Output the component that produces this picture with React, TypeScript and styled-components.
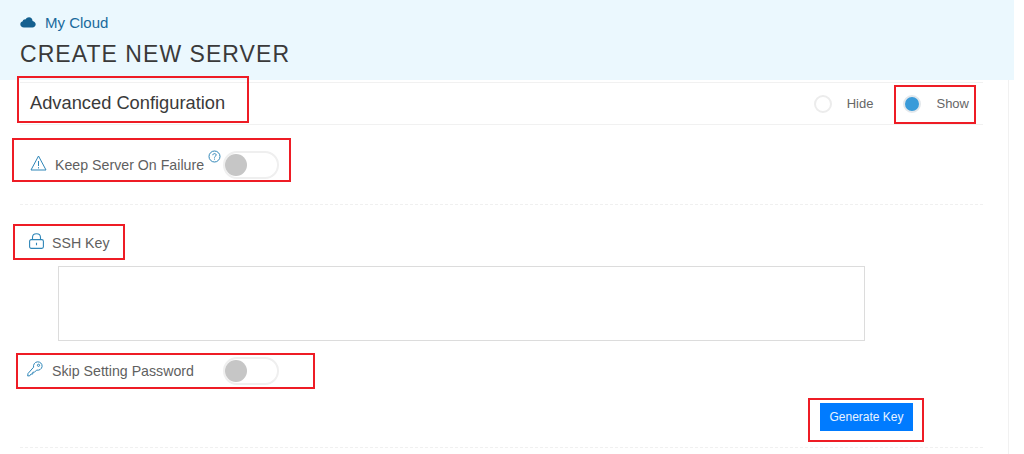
import styled, { createGlobalStyle } from 'styled-components'

const GlobalStyle = createGlobalStyle`
  html, body {
    margin: 0;
    padding: 0;
    background: #fff;
    font-family: "Liberation Sans", Arial, sans-serif;
  }
`

const Page = styled.div`
  position: relative;
  width: 1024px;
  height: 454px;
  overflow: hidden;
`

const Header = styled.header`
  width: 1014px;
  height: 80px;
  box-sizing: border-box;
  padding: 13px 0 0 20px;
  background-color: #ebf8fe;
  background-image: radial-gradient(#dff0f8 0.6px, transparent 0.6px);
  background-size: 6px 6px;
`

const Crumb = styled.div`
  display: flex;
  align-items: center;
  gap: 9px;
  height: 18px;
  color: #1a6a9c;
  font-size: 15px;
`

const PageTitle = styled.h1`
  margin: 10px 0 0;
  font-size: 23px;
  font-weight: 400;
  line-height: 26px;
  letter-spacing: 1.05px;
  color: #3a3a3a;
`

const Body = styled.main`
  width: 1009px;
  height: 374px;
  box-sizing: border-box;
  padding: 2px 25px 0 20px;
  border-right: 1px solid #f1f1f1;
`

const TopRow = styled.section`
  display: flex;
  align-items: center;
  justify-content: space-between;
  height: 41px;
  padding: 0 14px 0 10px;
  border-top: 1px solid #f1f1f1;
  border-bottom: 1px solid #f1f1f1;
`

const SectionTitle = styled.h2`
  margin: 0 0 1px;
  font-size: 18.3px;
  font-weight: 400;
  color: #3a3a3a;
`

const RadioGroup = styled.div`
  display: flex;
  align-items: center;
  gap: 30px;
`

const RadioOption = styled.label`
  display: flex;
  align-items: center;
  gap: 15px;
  font-size: 13px;
  color: #666;
`

const RadioDot = styled.span<{ $on?: boolean }>`
  width: 14px;
  height: 14px;
  border-radius: 50%;
  border: 2px solid ${p => (p.$on ? '#e3e8ec' : '#ececec')};
  background: ${p => (p.$on ? '#3a9bd9' : '#fff')};
`

const FieldRow = styled.div<{ $height: number; $pad?: number; $top?: number }>`
  display: flex;
  align-items: center;
  box-sizing: border-box;
  height: ${p => p.$height}px;
  padding: ${p => p.$top ?? 0}px 0 0 ${p => p.$pad ?? 10}px;
  font-size: 14.2px;
  color: #5f5f5f;
`

const IconSlot = styled.span<{ $width: number; $lift: number }>`
  display: flex;
  width: ${p => p.$width}px;
  margin-bottom: ${p => p.$lift}px;
  flex: none;
`

const Label = styled.span<{ $width?: number }>`
  width: ${p => (p.$width ? `${p.$width}px` : 'auto')};
  flex: none;
`

const HelpIcon = styled.svg`
  margin: 0 2px 16px 4px;
  flex: none;
`

const Toggle = styled.span`
  position: relative;
  display: block;
  flex: none;
  width: 56px;
  height: 28px;
  box-sizing: border-box;
  border: 2px solid #efefef;
  border-radius: 14px;
  background: #fff;

  &::after {
    content: '';
    position: absolute;
    left: 0;
    top: 1px;
    width: 22px;
    height: 22px;
    border-radius: 50%;
    background: #c6c6c6;
  }
`

const DashedLine = styled.hr`
  margin: 0;
  border: 0;
  border-top: 1px dashed #f0f0f0;
`

const KeyBox = styled.textarea`
  display: block;
  width: 807px;
  height: 75px;
  box-sizing: border-box;
  margin: 0 0 16px 38px;
  border: 1px solid #dcdcdc;
  resize: none;
  outline: none;
`

const ButtonRow = styled.div`
  display: flex;
  justify-content: flex-end;
  padding: 18px 70px 16px 0;
`

const PrimaryButton = styled.button`
  width: 93px;
  height: 28px;
  padding: 0;
  border: 0;
  background: #007bff;
  color: #e8f3ff;
  font-family: inherit;
  font-size: 12px;
`

const Callout = styled.div<{ $x: number; $y: number; $w: number; $h: number }>`
  position: absolute;
  left: ${p => p.$x}px;
  top: ${p => p.$y}px;
  width: ${p => p.$w}px;
  height: ${p => p.$h}px;
  box-sizing: border-box;
  border: 2px solid #ee1c25;
  pointer-events: none;
`

const stroke = '#2f86b8'

const App = () => (
  <Page>
    <GlobalStyle />
    <Header>
      <Crumb>
        <svg width="16" height="12" viewBox="0 0 16 12">
          <path
            d="M4 11.5C1.8 11.5 0.3 10.1 0.3 8.3 0.3 6.8 1.3 5.6 2.7 5.3 3.1 3.9 4.3 3.2 5.5 3.4 6.3 1.9 7.6 1.2 9 1.2 11 1.2 12.5 2.8 12.6 4.9 14.4 5.2 15.7 6.6 15.7 8.3 15.7 10.2 14.2 11.5 12.4 11.5Z"
            fill="#14608f"
          />
        </svg>
        My Cloud
      </Crumb>
      <PageTitle>CREATE NEW SERVER</PageTitle>
    </Header>
    <Body>
      <TopRow>
        <SectionTitle>Advanced Configuration</SectionTitle>
        <RadioGroup>
          <RadioOption>
            <RadioDot />
            Hide
          </RadioOption>
          <RadioOption>
            <RadioDot $on />
            Show
          </RadioOption>
        </RadioGroup>
      </TopRow>
      <FieldRow $height={79}>
        <IconSlot $width={25} $lift={4}>
          <svg width="17" height="16" viewBox="0 0 17 16" fill="none" stroke={stroke} strokeWidth="1">
            <path d="M8.5 1 16 15H1Z" strokeLinejoin="round" />
            <path d="M8.5 6v5M8.5 12.2v1.2" />
          </svg>
        </IconSlot>
        <Label>Keep Server On Failure</Label>
        <HelpIcon width="13" height="13" viewBox="0 0 13 13" fill="none" stroke={stroke}>
          <circle cx="6.5" cy="6.5" r="5.5" />
          <path d="M4.8 5.2C4.8 4.2 5.6 3.6 6.5 3.6 7.5 3.6 8.2 4.2 8.2 5 8.2 6.2 6.5 6.2 6.5 7.6M6.5 8.6v1" />
        </HelpIcon>
        <Toggle />
      </FieldRow>
      <DashedLine />
      <FieldRow $height={61} $top={15} $pad={9}>
        <IconSlot $width={23} $lift={4}>
          <svg width="15" height="16" viewBox="0 0 15 16" fill="none" stroke={stroke} strokeWidth="1.1">
            <rect x="0.6" y="6.6" width="13.8" height="8.8" rx="1.6" />
            <path d="M3.5 6.5V4.5C3.5 2.3 5.3 0.7 7.5 0.7S11.5 2.3 11.5 4.5V6.5M7.5 9.8v2.4" />
          </svg>
        </IconSlot>
        <Label>SSH Key</Label>
      </FieldRow>
      <KeyBox />
      <FieldRow $height={28} $pad={7}>
        <IconSlot $width={25} $lift={5}>
          <svg width="16" height="16" viewBox="0 0 16 16" fill="none" stroke={stroke} strokeWidth="1">
            <path d="M6.6 6.2C6 4 7.6 1 10.5 0.8 13.2 0.7 15.3 2.8 15.1 5.4 14.9 8 12 9.8 9.6 9.1L7.5 11.2H5.8V13H4L2.9 14.7 0.7 15 1 12.5Z" strokeLinejoin="round" />
            <circle cx="11.5" cy="4.3" r="1.1" />
          </svg>
        </IconSlot>
        <Label $width={171}>Skip Setting Password</Label>
        <Toggle />
      </FieldRow>
      <ButtonRow>
        <PrimaryButton>Generate Key</PrimaryButton>
      </ButtonRow>
      <DashedLine />
    </Body>
    <Callout $x={17} $y={76} $w={232} $h={47} />
    <Callout $x={894} $y={85} $w={82} $h={39} />
    <Callout $x={12} $y={138} $w={279} $h={44} />
    <Callout $x={13} $y={224} $w={112} $h={36} />
    <Callout $x={16} $y={353} $w={299} $h={36} />
    <Callout $x={808} $y={398} $w={116} $h={44} />
  </Page>
)

export default App
